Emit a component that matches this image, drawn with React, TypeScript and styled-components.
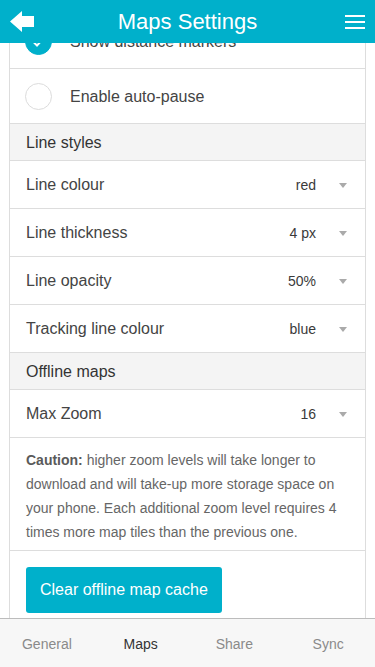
import React, { useLayoutEffect, useRef } from 'react';
import styled, { createGlobalStyle } from 'styled-components';

const teal = '#00b0cb';

const GlobalStyle = createGlobalStyle`
  html, body { margin: 0; padding: 0; background: #fff; }
  body { font-family: "Liberation Sans", Arial, sans-serif; }
  * { box-sizing: border-box; }
`;

const Screen = styled.div`
  width: 375px;
  height: 667px;
  display: flex;
  flex-direction: column;
  overflow: hidden;
  background: #fff;
`;

const Header = styled.header`
  flex: none;
  height: 43px;
  background: ${teal};
  display: grid;
  grid-template-columns: 1fr auto 1fr;
  align-items: center;
  padding: 0 10px;
`;

const Title = styled.h1`
  margin: 1px 0 0;
  font-size: 22px;
  font-weight: 400;
  color: #fff;
`;

const IconBtn = styled.button<{ $end?: boolean }>`
  border: 0;
  background: none;
  padding: 0;
  display: flex;
  justify-self: ${(p) => (p.$end ? 'end' : 'start')};
  margin-top: 1px;
`;

const Scroller = styled.main`
  flex: 1;
  position: relative;
  overflow-y: auto;
  scrollbar-width: none;
  &::-webkit-scrollbar { display: none; }
`;

const Card = styled.div`
  margin: 0 9px 16px;
  border-left: 1px solid #ddd;
  border-right: 1px solid #ddd;
`;

const SectionTitle = styled.div`
  height: 37px;
  display: flex;
  align-items: center;
  padding: 1px 16px 0;
  background: #f4f4f4;
  border-bottom: 1px solid #ddd;
  font-size: 16px;
  color: #333;
`;

const CheckRow = styled.div`
  height: 55px;
  display: flex;
  align-items: center;
  padding: 1px 15px 0;
  border-bottom: 1px solid #ddd;
  font-size: 16px;
  color: #444;
`;

const Circle = styled.span<{ $on?: boolean }>`
  width: 27px;
  height: 27px;
  flex: none;
  border-radius: 50%;
  margin-right: 18px;
  display: flex;
  align-items: center;
  justify-content: center;
  border: 1px solid ${(p) => (p.$on ? teal : '#dcdcdc')};
  background: ${(p) => (p.$on ? teal : '#fff')};
`;

const SelectRow = styled.div`
  height: 48px;
  display: flex;
  align-items: center;
  padding: 1px 18px 0 16px;
  border-bottom: 1px solid #ddd;
  font-size: 16px;
  color: #444;
`;

const Label = styled.span`
  flex: 1;
`;

const Value = styled.span`
  font-size: 14px;
  color: #3a3a3a;
`;

const Caret = styled.span`
  width: 0;
  height: 0;
  margin-left: 23px;
  border-left: 4.5px solid transparent;
  border-right: 4.5px solid transparent;
  border-top: 5px solid #aaa;
`;

const Note = styled.p`
  margin: 0;
  padding: 10px 16px 6px;
  font-size: 14px;
  line-height: 24px;
  color: #666;
  border-bottom: 1px solid #ddd;
  b { color: #5a5a5a; }
`;

const ButtonBox = styled.div`
  padding: 16px;
`;

const ClearButton = styled.button`
  height: 46px;
  padding: 0 14px;
  border: 0;
  border-radius: 3px;
  background: ${teal};
  color: #fff;
  font-family: inherit;
  font-size: 16px;
`;

const TabBar = styled.nav`
  flex: none;
  height: 49px;
  display: grid;
  grid-template-columns: repeat(4, 1fr);
  background: #f7f7f7;
  border-top: 1px solid #bcbcbc;
`;

const Tab = styled.div<{ $active?: boolean }>`
  display: flex;
  align-items: center;
  justify-content: center;
  padding-top: 2px;
  font-size: 14px;
  color: ${(p) => (p.$active ? '#333' : '#8a8a8a')};
`;

const selects = [
  { label: 'Line colour', value: 'red' },
  { label: 'Line thickness', value: '4 px' },
  { label: 'Line opacity', value: '50%' },
  { label: 'Tracking line colour', value: 'blue' },
];

function Check() {
  return (
    <svg width="13" height="10" viewBox="0 0 13 10">
      <path d="M1.5 5l3.5 3.5L11.5 1.5" fill="none" stroke="#fff" strokeWidth="2" />
    </svg>
  );
}

export default function App() {
  const scroller = useRef<HTMLElement>(null);
  const markers = useRef<HTMLDivElement>(null);

  // the screenshot is taken part way down the settings list
  useLayoutEffect(() => {
    if (scroller.current && markers.current) {
      scroller.current.scrollTop = markers.current.offsetTop + 29;
    }
  }, []);

  return (
    <Screen>
      <GlobalStyle />
      <Header>
        <IconBtn aria-label="Back">
          <svg width="24" height="22" viewBox="0 0 24 22">
            <polygon points="0,10.5 12,0 12,5 24,5 24,16 12,16 12,21" fill="#fff" />
          </svg>
        </IconBtn>
        <Title>Maps Settings</Title>
        <IconBtn $end aria-label="Menu">
          <svg width="20" height="14" viewBox="0 0 20 14">
            <rect y="0" width="20" height="2" fill="#fff" />
            <rect y="6" width="20" height="2" fill="#fff" />
            <rect y="12" width="20" height="2" fill="#fff" />
          </svg>
        </IconBtn>
      </Header>

      <Scroller ref={scroller}>
        <Card>
          <SectionTitle>Map display</SectionTitle>
          <CheckRow ref={markers}>
            <Circle $on><Check /></Circle>
            Show distance markers
          </CheckRow>
          <CheckRow>
            <Circle />
            Enable auto-pause
          </CheckRow>

          <SectionTitle>Line styles</SectionTitle>
          {selects.map((s) => (
            <SelectRow key={s.label}>
              <Label>{s.label}</Label>
              <Value>{s.value}</Value>
              <Caret />
            </SelectRow>
          ))}

          <SectionTitle>Offline maps</SectionTitle>
          <SelectRow>
            <Label>Max Zoom</Label>
            <Value>16</Value>
            <Caret />
          </SelectRow>
          <Note>
            <b>Caution:</b> higher zoom levels will take longer to download and will take-up more
            storage space on your phone. Each additional zoom level requires 4 times more map tiles
            than the previous one.
          </Note>
          <ButtonBox>
            <ClearButton>Clear offline map cache</ClearButton>
          </ButtonBox>
        </Card>
      </Scroller>

      <TabBar>
        <Tab>General</Tab>
        <Tab $active>Maps</Tab>
        <Tab>Share</Tab>
        <Tab>Sync</Tab>
      </TabBar>
    </Screen>
  );
}
